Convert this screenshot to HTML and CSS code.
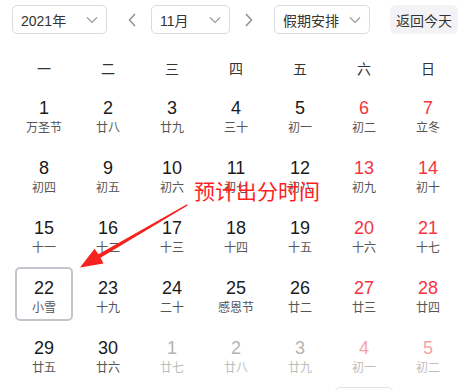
FILE: index.html
```html
<!DOCTYPE html>
<html lang="zh-CN">
<head>
    <meta charset="UTF-8">
    <title>日历</title>
    <link rel="stylesheet" href="styles.css">
</head>
<body>
    <div class="calendar">
        <div class="toolbar">
            <div class="select select-year">
                <span>2021年</span>
                <svg class="chevron" width="12" height="8" viewBox="0 0 12 8"><path d="M1 1.5 L6 6.5 L11 1.5" fill="none" stroke="#9a9aa2" stroke-width="1.2"/></svg>
            </div>
            <span class="nav nav-prev">
                <svg width="8" height="14" viewBox="0 0 8 14"><path d="M7 1 L1.5 7 L7 13" fill="none" stroke="#8c8c94" stroke-width="1.4"/></svg>
            </span>
            <div class="select select-month">
                <span>11月</span>
                <svg class="chevron" width="12" height="8" viewBox="0 0 12 8"><path d="M1 1.5 L6 6.5 L11 1.5" fill="none" stroke="#9a9aa2" stroke-width="1.2"/></svg>
            </div>
            <span class="nav nav-next">
                <svg width="8" height="14" viewBox="0 0 8 14"><path d="M1 1 L6.5 7 L1 13" fill="none" stroke="#8c8c94" stroke-width="1.4"/></svg>
            </span>
            <div class="select select-holiday">
                <span>假期安排</span>
                <svg class="chevron" width="12" height="8" viewBox="0 0 12 8"><path d="M1 1.5 L6 6.5 L11 1.5" fill="none" stroke="#9a9aa2" stroke-width="1.2"/></svg>
            </div>
            <button class="today-btn">返回今天</button>
        </div>

        <div class="weekdays">
            <span>一</span><span>二</span><span>三</span><span>四</span><span>五</span><span>六</span><span>日</span>
        </div>

        <div class="days">
            <div class="day"><b>1</b><i>万圣节</i></div>
            <div class="day"><b>2</b><i>廿八</i></div>
            <div class="day"><b>3</b><i>廿九</i></div>
            <div class="day"><b>4</b><i>三十</i></div>
            <div class="day"><b>5</b><i>初一</i></div>
            <div class="day weekend"><b>6</b><i>初二</i></div>
            <div class="day weekend"><b>7</b><i>立冬</i></div>

            <div class="day"><b>8</b><i>初四</i></div>
            <div class="day"><b>9</b><i>初五</i></div>
            <div class="day"><b>10</b><i>初六</i></div>
            <div class="day"><b>11</b><i>初七</i></div>
            <div class="day"><b>12</b><i>初八</i></div>
            <div class="day weekend"><b>13</b><i>初九</i></div>
            <div class="day weekend"><b>14</b><i>初十</i></div>

            <div class="day"><b>15</b><i>十一</i></div>
            <div class="day"><b>16</b><i>十二</i></div>
            <div class="day"><b>17</b><i>十三</i></div>
            <div class="day"><b>18</b><i>十四</i></div>
            <div class="day"><b>19</b><i>十五</i></div>
            <div class="day weekend"><b>20</b><i>十六</i></div>
            <div class="day weekend"><b>21</b><i>十七</i></div>

            <div class="day selected"><b>22</b><i>小雪</i></div>
            <div class="day"><b>23</b><i>十九</i></div>
            <div class="day"><b>24</b><i>二十</i></div>
            <div class="day"><b>25</b><i>感恩节</i></div>
            <div class="day"><b>26</b><i>廿二</i></div>
            <div class="day weekend"><b>27</b><i>廿三</i></div>
            <div class="day weekend"><b>28</b><i>廿四</i></div>

            <div class="day"><b>29</b><i>廿五</i></div>
            <div class="day"><b>30</b><i>廿六</i></div>
            <div class="day other"><b>1</b><i>廿七</i></div>
            <div class="day other"><b>2</b><i>廿八</i></div>
            <div class="day other"><b>3</b><i>廿九</i></div>
            <div class="day other weekend"><b>4</b><i>初一</i></div>
            <div class="day other weekend"><b>5</b><i>初二</i></div>

            <!-- next row, only its top edge is in view -->
            <div class="day"></div>
            <div class="day"></div>
            <div class="day"></div>
            <div class="day"></div>
            <div class="day"></div>
            <div class="day hover"></div>
            <div class="day"></div>
        </div>

        <!-- annotation over the grid -->
        <div class="note">预计出分时间</div>
        <svg class="note-arrow" width="467" height="391" viewBox="0 0 467 391">
            <polygon points="187,204.2 98.5,254.2 94.5,248.8 80,267.5 103.5,263.5 100.5,257.8 187.6,205.4" fill="#f5221f"/>
        </svg>
    </div>
</body>
</html>
```

FILE: styles.css
```css
* {
    box-sizing: border-box;
}

body {
    margin: 0;
    background: #fff;
    font-family: "Liberation Sans", "Noto Sans CJK SC", sans-serif;
    color: #1f1f1f;
}

.calendar {
    position: relative;
    width: 467px;
    height: 391px;
    overflow: hidden;
    padding: 5px 0 0 12px;
}

/* toolbar */
.toolbar {
    display: flex;
    align-items: center;
    height: 29px;
}

.select {
    display: flex;
    align-items: center;
    justify-content: space-between;
    height: 29px;
    padding: 0 8px 0 8px;
    border: 1px solid #dadae2;
    border-radius: 5px;
    font-size: 14px;
    color: #333;
}

.select-year {
    width: 95px;
}

.select-month {
    width: 79px;
}

.select-holiday {
    width: 96px;
}

.nav {
    display: flex;
    align-items: center;
    width: 8px;
    height: 14px;
}

.nav-prev {
    margin: 0 15px 0 21px;
}

.nav-next {
    margin: 0 21px 0 15px;
}

.today-btn {
    margin-left: 20px;
    width: 68px;
    height: 29px;
    border: none;
    border-radius: 6px;
    background: #f3f3f5;
    font-family: "Noto Sans CJK SC", sans-serif;
    font-size: 14px;
    color: #333;
    padding: 0;
}

/* grid */
.weekdays {
    display: grid;
    grid-template-columns: repeat(7, 64px);
    margin-top: 18px;
    height: 32px;
    line-height: 32px;
    text-align: center;
    font-family: "Noto Sans CJK SC", sans-serif;
    font-size: 14px;
    color: #333;
}

.days {
    display: grid;
    grid-template-columns: repeat(7, 64px);
    grid-auto-rows: 60px;
}

.day {
    margin: 3px;
    height: 54px;
    border: 2px solid transparent;
    border-radius: 5px;
    padding-top: 9px;
    text-align: center;
}

.day b {
    display: block;
    font-weight: normal;
    font-size: 18px;
    line-height: 20px;
    color: #1a1a1a;
}

.day i {
    display: block;
    font-style: normal;
    font-family: "Noto Sans CJK SC", sans-serif;
    font-size: 12px;
    line-height: 18px;
    color: #555;
}

.day.weekend b {
    color: #f5343f;
}

.day.other b {
    color: #b4b4b4;
}

.day.other i {
    color: #bdbdbd;
}

.day.other.weekend b {
    color: #f6a3a8;
}

.day.selected {
    border-color: #c4c4cc;
}

.day.hover {
    border: 1px solid #e2e2e8;
}

/* annotation */
.note {
    position: absolute;
    left: 194px;
    top: 176px;
    font-family: "Noto Sans CJK SC", sans-serif;
    font-size: 21px;
    line-height: 28px;
    color: #ff1f1f;
}

.note-arrow {
    position: absolute;
    left: 0;
    top: 0;
}
```
